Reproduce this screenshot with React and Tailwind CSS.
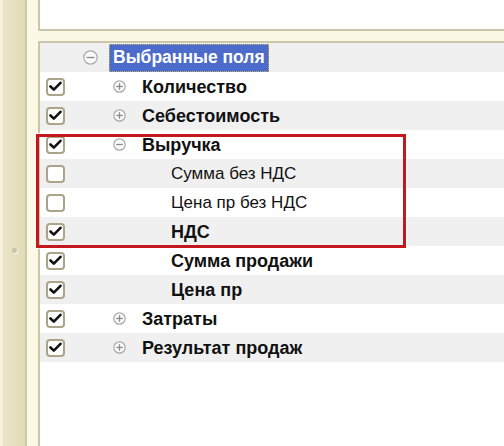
import React from "react";

const rows = [
  { label: "Выбранные поля", level: 0, icon: "minus", header: true },
  { label: "Количество", level: 1, icon: "plus", bold: true, checked: true },
  { label: "Себестоимость", level: 1, icon: "plus", bold: true, checked: true },
  { label: "Выручка", level: 1, icon: "minus", bold: true, checked: true },
  { label: "Сумма без НДС", level: 2, bold: false, checked: false },
  { label: "Цена пр без НДС", level: 2, bold: false, checked: false },
  { label: "НДС", level: 2, bold: true, checked: true },
  { label: "Сумма продажи", level: 2, bold: true, checked: true },
  { label: "Цена пр", level: 2, bold: true, checked: true },
  { label: "Затраты", level: 1, icon: "plus", bold: true, checked: true },
  { label: "Результат продаж", level: 1, icon: "plus", bold: true, checked: true },
];

const indentClass = ["w-[14px]", "w-[43px]", "w-[72px]"];

function Checkbox({ checked }) {
  return (
    <div className="w-[19px] h-[18px] rounded-[4px] border-2 border-[#aaa488] bg-white flex items-center justify-center">
      {checked && (
        <svg width="13" height="11" viewBox="0 0 13 11">
          <path d="M1.5 5.5 L4.8 8.6 L11.5 1.8" fill="none" stroke="#111" strokeWidth="2.6" strokeLinecap="round" strokeLinejoin="round" />
        </svg>
      )}
    </div>
  );
}

function TreeIcon({ type, big }) {
  const s = big ? 15 : 13;
  const c = s / 2;
  return (
    <svg width={s} height={s} viewBox={`0 0 ${s} ${s}`}>
      <circle cx={c} cy={c} r={c - 0.8} fill="#fafafa" stroke="#a8a8a8" strokeWidth="1.2" />
      <line x1={c - (big ? 4 : 3.3)} y1={c} x2={c + (big ? 4 : 3.3)} y2={c} stroke="#8a8a8a" strokeWidth="1.3" />
      {type === "plus" && (
        <line x1={c} y1={c - 3.3} x2={c} y2={c + 3.3} stroke="#8a8a8a" strokeWidth="1.3" />
      )}
    </svg>
  );
}

function Row({ row, index }) {
  const bg = index % 2 === 0 ? "bg-[#f0f0f0]" : "bg-white";
  return (
    <div className={`flex items-center h-[29px] ${bg}`}>
      <div className="w-[30px] pl-[6px] flex items-center shrink-0">
        {!row.header && <Checkbox checked={row.checked} />}
      </div>
      <div className={`${indentClass[row.level]} shrink-0`} />
      <div className={`w-[15px] shrink-0 flex items-center ${row.header ? "-ml-[1px]" : ""}`}>
        {row.icon && <TreeIcon type={row.icon} big={row.header} />}
      </div>
      {row.header ? (
        <div className="ml-[11px] h-[28px] flex items-center pl-[3px] w-[160px] shrink-0 whitespace-nowrap bg-[#4d6bcb] border border-dotted border-[#c6b36a] text-white font-bold text-[17.5px] leading-none">
          {row.label}
        </div>
      ) : (
        <div className={`ml-[14px] whitespace-nowrap leading-none text-[#111] ${row.bold ? "font-bold text-[18px]" : "font-normal text-[17px]"}`}>
          {row.label}
        </div>
      )}
    </div>
  );
}

export default function App() {
  return (
    <div
      className="relative w-[504px] h-[446px] overflow-hidden flex bg-[#fbf9e5]"
      style={{ fontFamily: '"Liberation Sans", Arial, sans-serif' }}
    >
      <div className="w-[27px] shrink-0 flex">
        <div className="w-[3px] bg-[#f6f2de]" />
        <div className="flex-1 bg-gradient-to-r from-[#ebe5c7] to-[#e2dbb9] flex flex-col items-center pt-[248px]">
          <div className="w-[5px] h-[5px] rounded-full bg-[#c9c4ae] shadow-[1px_1px_0_#f6f3e3]" />
        </div>
        <div className="w-[2px] bg-[#cfc8a6]" />
      </div>
      <div className="flex-1 flex flex-col pl-[11px]">
        <div className="h-[31px] shrink-0 bg-white border-l-2 border-b-2 border-[#cbc6a8]" />
        <div className="h-[10px] shrink-0" />
        <div className="flex-1 bg-white border-l-2 border-t-2 border-[#cbc6a8]">
          {rows.map((r, i) => (
            <Row key={i} row={r} index={i} />
          ))}
        </div>
      </div>
      <div className="absolute left-[36px] top-[134px] w-[370px] h-[114px] border-[3px] border-[#c2181e] shadow-[0_0_0_1px_rgba(255,255,255,0.6)] pointer-events-none" />
    </div>
  );
}
